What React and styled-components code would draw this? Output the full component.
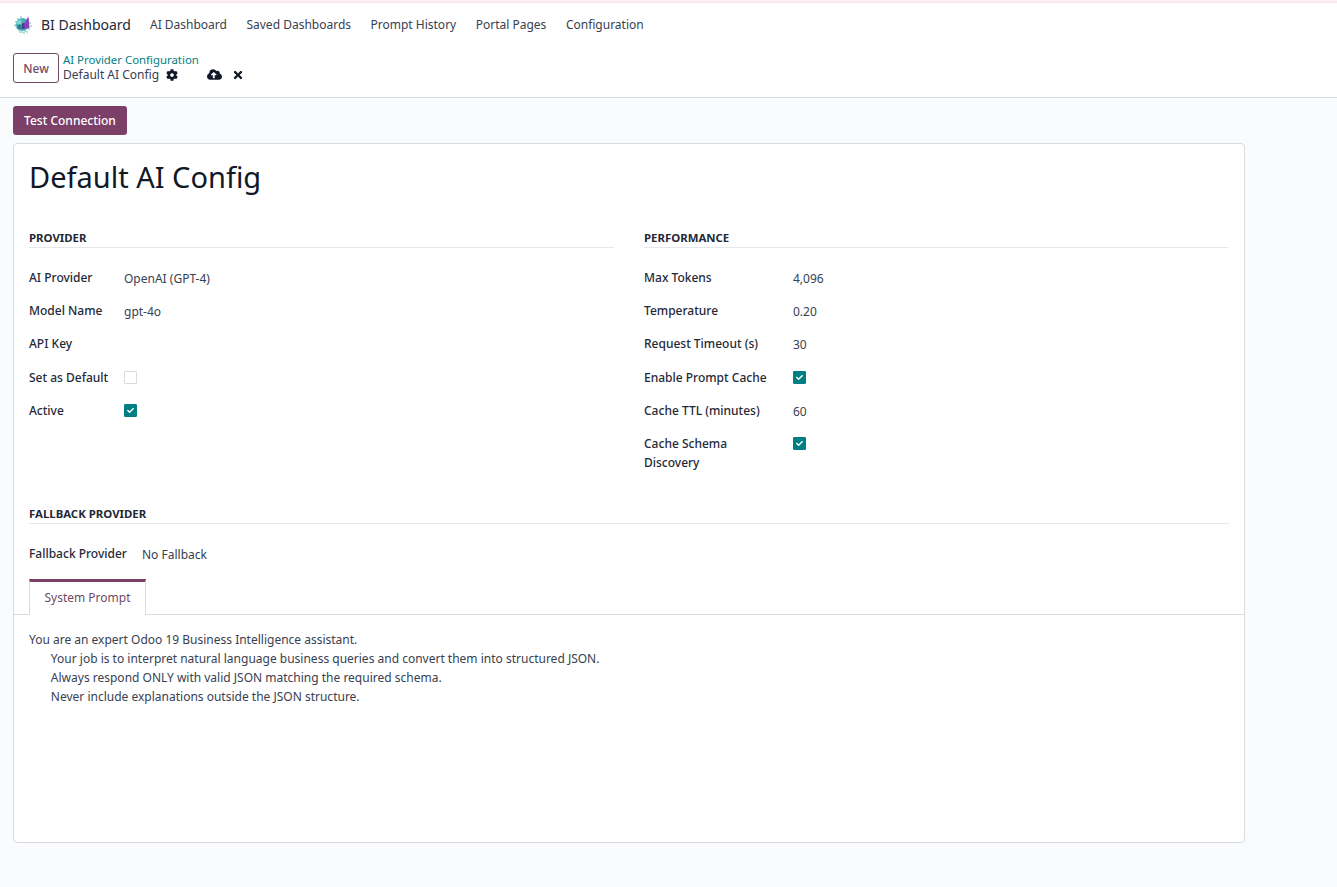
import React from "react";
import styled, { createGlobalStyle } from "styled-components";
import { FaCog, FaCloudUploadAlt, FaTimes, FaCheck } from "react-icons/fa";

const Global = createGlobalStyle`
  html, body { margin: 0; padding: 0; }
  body { background: #f9fbfd; font-family: "Noto Sans", "Open Sans", sans-serif; font-size: 12px; color: #374151; }
`;
const Page = styled.div`height: 887px; display: flex; flex-direction: column; overflow: hidden;`;
const Strip = styled.div`height: 3px; box-sizing: border-box; background: #fdeef1; border-bottom: 1px solid #f6e6ea;`;
const Nav = styled.nav`height: 42px; background: #fff; display: flex; align-items: center; padding-left: 13px;`;
const Brand = styled.div`display: flex; align-items: center; gap: 8px; font-size: 14px; color: #1f2937; margin-right: 19px;`;
const NavItem = styled.a`font-size: 12px; color: #374151; margin-right: 19.5px;`;
const Control = styled.div`height: 53px; box-sizing: border-box; background: #fff; border-bottom: 1px solid #d8dadd; display: flex; align-items: flex-start; padding: 8px 0 0 13px; gap: 4px;`;
const NewButton = styled.button`width: 46px; height: 30px; background: #fff; border: 1px solid #714b67; border-radius: 3px; color: #714b67; font: 500 12px "Noto Sans", sans-serif; padding: 0;`;
const Crumbs = styled.div`display: flex; flex-direction: column; line-height: 15px; margin-top: -1px;`;
const CrumbLink = styled.a`font-size: 11.4px; color: #017e84;`;
const CrumbRow = styled.div`display: flex; align-items: center; font-size: 12px; color: #374151;`;
const IconBtn = styled.span`display: inline-flex; color: #111827; margin-left: ${p => p.$gap}px;`;
const Actions = styled.div`padding: 8px 13px 0; height: 29px;`;
const Primary = styled.button`width: 114px; height: 29px; background: #7c3f68; color: #fff; border: 0; border-radius: 3px; font: 500 12px "Noto Sans", sans-serif; padding: 0;`;
const Sheet = styled.section`width: 1230px; height: 698px; margin: 8px 0 0 13px; background: #fff; border: 1px solid #d8dadd; border-radius: 4px; display: flex; flex-direction: column;`;
const Title = styled.h1`margin: 0; padding: 14px 15px 0; height: 53px; font-size: 29px; line-height: 38px; font-weight: 400; color: #111827;`;
const Columns = styled.div`display: grid; grid-template-columns: 585px 584px; column-gap: 30px; padding: 19px 15px 0;`;
const Group = styled.div`display: flex; flex-direction: column;`;
const SectionHead = styled.h2`margin: 0; font-size: 11.4px; line-height: 16px; padding-bottom: 1px; font-weight: 700; color: #1f2937; border-bottom: 1px solid #e5e7eb; text-transform: uppercase;`;
const Rows = styled.div`padding-top: 12px; display: flex; flex-direction: column;`;
const Row = styled.div`display: grid; grid-template-columns: ${p => p.$label}px 1fr; min-height: 33.2px; align-items: start; padding-top: 8px; box-sizing: border-box;`;
const Label = styled.label`font-size: 12px; line-height: 19px; font-weight: 500; color: #1f2937;`;
const Value = styled.span`font-size: 12px; line-height: 19px; color: #374151; padding-top: 1px;`;
const Box = styled.span`width: 13px; height: 13px; margin-top: 3px; border-radius: 1px; box-sizing: border-box; display: flex; align-items: center; justify-content: center; color: #fff; font-size: 7px;
  background: ${p => p.$on ? "#017e84" : "#fff"}; border: 1px solid ${p => p.$on ? "#017e84" : "#d8dadd"};`;
const Fallback = styled.div`padding: 0 15px; margin-top: 34px;`;
const Tabs = styled.div`display: flex; border-bottom: 1px solid #d8dadd; padding-left: 15px; height: 35px; margin-top: 9.5px;`;
const Tab = styled.div`width: 117px; box-sizing: border-box; height: 36px; padding-bottom: 2px; border: 1px solid #d8dadd; border-top: 3px solid #7c3f68; border-bottom: 0; background: #fff; color: #714b67; font-size: 12px; display: flex; align-items: center; justify-content: center;`;
const Prompt = styled.div`padding: 15px 15px 0; font-size: 12px; line-height: 19px; color: #374151; white-space: pre-wrap;`;

const speckles = [[3,8],[2,11],[4,14],[6,16],[9,18],[12,17],[5,5],[8,3],[3,12],[6,6],[17,9],[18,12],[16,15],[14,18],[11,19],[7,18]];
const Logo = () => (
  <svg width="20" height="20" viewBox="0 0 20 20">
    <circle cx="9.5" cy="10.5" r="6.5" fill="#45b3b5" />
    <circle cx="6" cy="8" r="2.5" fill="#7fd8d6" />
    <circle cx="6.5" cy="13" r="2.5" fill="#2a7f93" />
    <circle cx="10" cy="11" r="2" fill="#d05a9a" />
    {speckles.map(([x, y]) => <circle key={`${x}-${y}`} cx={x} cy={y} r=".7" fill="#3aa6a8" />)}
    <path d="M9 15 L9 10 L11.5 8 L12 15Z" fill="#4b3f8f" />
    <path d="M11.5 15 L12.5 7 L15.5 2.5 L16.5 14Z" fill="#8a3fc0" />
  </svg>
);
const Check = ({ on }) => <Box $on={on}>{on && <FaCheck />}</Box>;
const F = ({ label, w, children }) => (
  <Row $label={w}><Label>{label}</Label>{children}</Row>
);

export default function App() {
  return (
    <Page>
      <Global />
      <Strip />
      <Nav>
        <Brand><Logo />BI Dashboard</Brand>
        {["AI Dashboard", "Saved Dashboards", "Prompt History", "Portal Pages", "Configuration"].map(t => <NavItem key={t}>{t}</NavItem>)}
      </Nav>
      <Control>
        <NewButton>New</NewButton>
        <Crumbs>
          <CrumbLink>AI Provider Configuration</CrumbLink>
          <CrumbRow>
            Default AI Config
            <IconBtn $gap={7}><FaCog size={12} /></IconBtn>
            <IconBtn $gap={29}><FaCloudUploadAlt size={15} /></IconBtn>
            <IconBtn $gap={10}><FaTimes size={12} /></IconBtn>
          </CrumbRow>
        </Crumbs>
      </Control>
      <Actions><Primary>Test Connection</Primary></Actions>
      <Sheet>
        <Title>Default AI Config</Title>
        <Columns>
          <Group>
            <SectionHead>Provider</SectionHead>
            <Rows>
              <F label="AI Provider" w={95}><Value>OpenAI (GPT-4)</Value></F>
              <F label="Model Name" w={95}><Value>gpt-4o</Value></F>
              <F label="API Key" w={95}><Value /></F>
              <F label="Set as Default" w={95}><Check /></F>
              <F label="Active" w={95}><Check on /></F>
            </Rows>
          </Group>
          <Group>
            <SectionHead>Performance</SectionHead>
            <Rows>
              <F label="Max Tokens" w={149}><Value>4,096</Value></F>
              <F label="Temperature" w={149}><Value>0.20</Value></F>
              <F label="Request Timeout (s)" w={149}><Value>30</Value></F>
              <F label="Enable Prompt Cache" w={149}><Check on /></F>
              <F label="Cache TTL (minutes)" w={149}><Value>60</Value></F>
              <F label={<>Cache Schema<br />Discovery</>} w={149}><Check on /></F>
            </Rows>
          </Group>
        </Columns>
        <Fallback>
          <SectionHead>Fallback Provider</SectionHead>
          <Rows>
            <F label="Fallback Provider" w={113}><Value>No Fallback</Value></F>
          </Rows>
        </Fallback>
        <Tabs><Tab>System Prompt</Tab></Tabs>
        <Prompt>{`You are an expert Odoo 19 Business Intelligence assistant.
       Your job is to interpret natural language business queries and convert them into structured JSON.
       Always respond ONLY with valid JSON matching the required schema.
       Never include explanations outside the JSON structure.`}</Prompt>
      </Sheet>
    </Page>
  );
}
